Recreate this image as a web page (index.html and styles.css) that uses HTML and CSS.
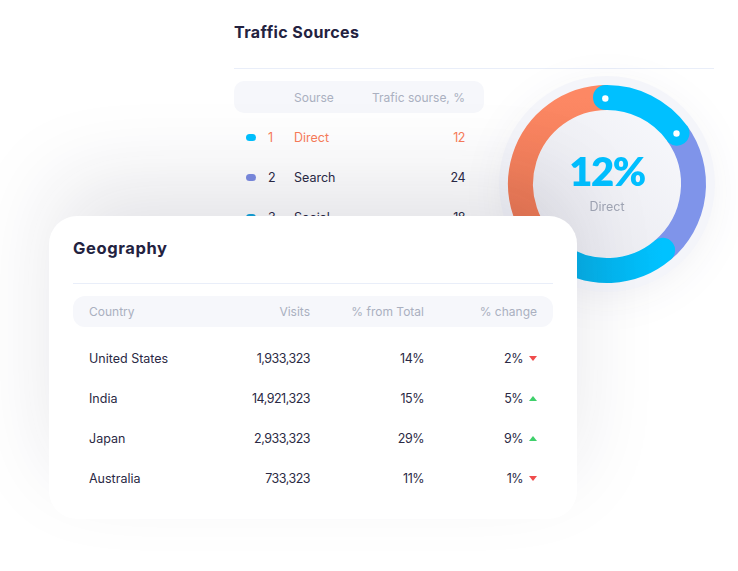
FILE: index.html
```html
<!DOCTYPE html>
<html lang="en">
<head>
<meta charset="utf-8">
<title>Traffic Sources &amp; Geography</title>
<link rel="stylesheet" href="styles.css">
</head>
<body>
<div class="stage">
  <section class="traffic">
    <h2 class="title">Traffic Sources</h2>
    <div class="divider wide"></div>
    <div class="ts-head">
      <span></span><span></span>
      <span>Sourse</span>
      <span class="r">Trafic sourse, %</span>
    </div>
    <div class="ts-row active">
      <span class="dot cyan"></span><span class="num">1</span><span>Direct</span><span class="r num">12</span>
    </div>
    <div class="ts-row">
      <span class="dot purple"></span><span class="num">2</span><span>Search</span><span class="r num">24</span>
    </div>
    <div class="ts-row">
      <span class="dot blue"></span><span class="num">3</span><span>Social</span><span class="r num">18</span>
    </div>
  </section>

  <div class="donut">
    <svg width="240" height="240" viewBox="0 0 240 240">
      <defs>
        <linearGradient id="gOrange" x1="0" y1="0" x2="0" y2="1">
          <stop offset="0" stop-color="#fd8864"/>
          <stop offset="1" stop-color="#e8744f"/>
        </linearGradient>
        <linearGradient id="gCyan" x1="0" y1="0" x2="1" y2="0">
          <stop offset="0" stop-color="#07a9df"/>
          <stop offset="1" stop-color="#00c2ff"/>
        </linearGradient>
        <linearGradient id="gDisc" x1="1" y1="0" x2="0" y2="1">
          <stop offset="0" stop-color="#f8f9fd"/>
          <stop offset="1" stop-color="#e7e7ed"/>
        </linearGradient>
      </defs>
      <circle cx="120" cy="120" r="108" fill="#f4f5fa"/>
      <circle cx="120" cy="120" r="74" fill="url(#gDisc)"/>
      <g fill="none" stroke-width="25">
        <path d="M70.39 190.86 A86.5 86.5 0 0 1 120 33.5" stroke="url(#gOrange)"/>
        <path d="M189.98 69.16 A86.5 86.5 0 0 1 175.6 186.26" stroke="#7f94ea"/>
        <path d="M175.6 186.26 A86.5 86.5 0 0 1 70.39 190.86" stroke="url(#gCyan)" stroke-linecap="round"/>
        <path d="M118.49 33.51 A86.5 86.5 0 0 1 189.98 69.16" stroke="#00c0ff" stroke-linecap="round"/>
      </g>
      <circle cx="118.3" cy="34.5" r="3.2" fill="#fff"/>
      <circle cx="189.5" cy="69.5" r="3.2" fill="#fff"/>
    </svg>
    <div class="donut-label">
      <span class="pct">12%</span>
      <span class="lbl">Direct</span>
    </div>
  </div>

  <section class="geo">
    <h2 class="title">Geography</h2>
    <div class="divider"></div>
    <div class="geo-head">
      <span>Country</span>
      <span class="r">Visits</span>
      <span class="r">% from Total</span>
      <span class="r">% change</span>
    </div>
    <div class="geo-row">
      <span>United States</span><span class="r num">1,933,323</span><span class="r num">14%</span>
      <span class="chg num">2%<i class="tri down"></i></span>
    </div>
    <div class="geo-row">
      <span>India</span><span class="r num">14,921,323</span><span class="r num">15%</span>
      <span class="chg num">5%<i class="tri up"></i></span>
    </div>
    <div class="geo-row">
      <span>Japan</span><span class="r num">2,933,323</span><span class="r num">29%</span>
      <span class="chg num">9%<i class="tri up"></i></span>
    </div>
    <div class="geo-row">
      <span>Australia</span><span class="r num">733,323</span><span class="r num">11%</span>
      <span class="chg num">1%<i class="tri down"></i></span>
    </div>
  </section>
</div>
</body>
</html>
```

FILE: styles.css
```css
* { box-sizing: border-box; }
html, body { margin: 0; padding: 0; background: #ffffff; }
body {
  font-family: Inter, "Noto Sans", sans-serif;
  color: #2a2944;
  width: 738px;
  height: 571px;
  overflow: hidden;
}
.stage {
  position: relative;
  width: 738px;
  height: 571px;
}
.title {
  margin: 0;
  font-size: 16px;
  line-height: 20px;
  font-weight: 700;
  color: #23223f;
  letter-spacing: 0.4px;
}
.divider {
  height: 1px;
  background: #e9eef9;
}
.r { text-align: right; }
.num {
  letter-spacing: -0.5px;
}

/* Traffic sources */
.traffic {
  padding: 22px 0 0 234px;
  width: 714px;
}
.traffic .divider { margin-top: 26px; }
.ts-head, .ts-row {
  display: grid;
  grid-template-columns: 22px 26px 1fr 120px;
  align-items: center;
  width: 250px;
  padding: 0 19px 0 12px;
  font-size: 12px;
}
.ts-head {
  margin-top: 12px;
  height: 32px;
  border-radius: 10px;
  background: #f6f7fb;
  color: #aab0c0;
}
.ts-row {
  height: 40px;
  color: #2a2944;
  font-size: 12.5px;
}
.ts-head + .ts-row { margin-top: 4px; }
.ts-row.active { color: #f97c5a; }
.dot {
  width: 10px;
  height: 7px;
  border-radius: 4px;
}
.dot.cyan { background: #00c2ff; }
.dot.purple { background: #7c8ce2; }
.dot.blue { background: #14a6dd; }

/* Donut */
.donut {
  position: absolute;
  left: 487px;
  top: 64px;
  width: 240px;
  height: 240px;
  filter: drop-shadow(0 8px 18px rgba(40, 40, 80, 0.06));
}
.donut svg { display: block; }
.donut-label {
  position: absolute;
  inset: 0;
  display: flex;
  flex-direction: column;
  align-items: center;
  justify-content: center;
  gap: 8px;
  padding-bottom: 3px;
}
.pct {
  font-family: Lato, sans-serif;
  font-size: 40px;
  line-height: 40px;
  font-weight: 800;
  color: #00bfff;
  letter-spacing: -1.5px;
}
.lbl {
  font-size: 12.5px;
  line-height: 16px;
  color: #a0a5b4;
}

/* Geography card */
.geo {
  position: absolute;
  left: 49px;
  top: 216px;
  width: 528px;
  height: 303px;
  background: #ffffff;
  border-radius: 28px;
  padding: 22px 24px 0;
  box-shadow: 0 -40px 90px -10px rgba(30, 30, 60, 0.13);
}
.geo .title { font-size: 16.5px; letter-spacing: 0.6px; }
.geo .divider { margin-top: 25px; }
.geo-head, .geo-row {
  display: grid;
  grid-template-columns: 111px 110px 114px 113px;
  align-items: center;
  padding: 0 16px;
  font-size: 12px;
}
.geo-head {
  margin-top: 12px;
  height: 31px;
  border-radius: 12px;
  background: #f6f7fb;
  color: #aab0c0;
}
.geo-row {
  height: 40px;
  color: #2a2944;
  font-size: 12.5px;
}
.geo-head + .geo-row { margin-top: 11px; }
.chg {
  display: flex;
  justify-content: flex-end;
  align-items: center;
  gap: 6px;
}
.tri {
  width: 0;
  height: 0;
  border-left: 4.5px solid transparent;
  border-right: 4.5px solid transparent;
}
.tri.down { border-top: 5px solid #f04b4b; }
.tri.up { border-bottom: 5px solid #3fd06b; }
```
